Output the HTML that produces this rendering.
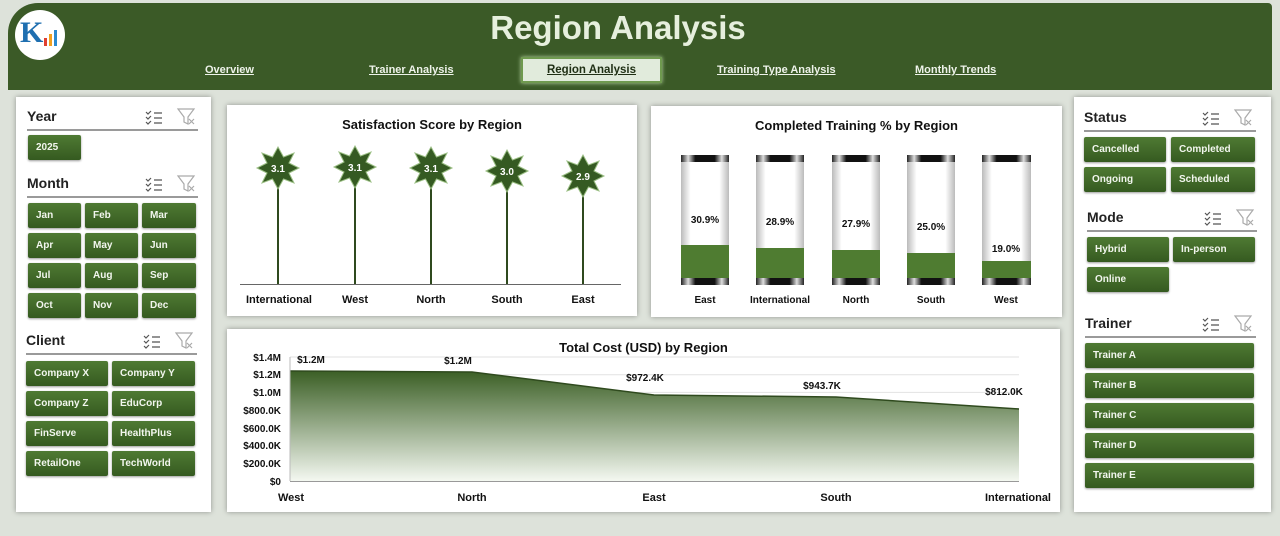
<!DOCTYPE html>
<html><head><meta charset="utf-8"><style>
*{margin:0;padding:0;box-sizing:border-box}
body{width:1280px;height:536px;background:#dde2da;font-family:"Liberation Sans",sans-serif;position:relative;overflow:hidden}
.a{position:absolute}
.hdr{left:8px;top:3px;width:1264px;height:87px;background:#3b5a27;border-radius:30px 4px 0 0}
.title{left:0;width:1236px;top:9px;text-align:center;font-size:33px;font-weight:bold;color:#e6efdd}
.nav{top:64px;font-size:11px;font-weight:bold;color:#eef3ea;text-decoration:underline}
.navsel{left:521px;top:57px;width:141px;height:26px;background:#e1ebdc;border:2px solid #6f9a4f;box-shadow:0 0 4px #b9d6a5;color:#1f2f14;font-size:11.5px;font-weight:bold;text-decoration:underline;text-align:center;line-height:22px}
.panel{background:#fff;box-shadow:0 0 5px rgba(0,0,0,.35)}
.h{font-size:14px;font-weight:bold;color:#222}
.ln{height:2px;background:#9a9a9a}
.b{background:linear-gradient(#4f7a33,#355a20);color:#f2f6ee;font-size:10px;font-weight:bold;padding-left:8px;line-height:25px;height:25px;border-radius:2px;box-shadow:0 1px 2px rgba(0,0,0,.4)}
.ct{font-size:13px;font-weight:bold;color:#111;text-align:center}
svg text{font-family:"Liberation Sans",sans-serif}
</style></head><body>
<div class="a hdr"></div>
<div class="a" style="left:15px;top:10px;width:50px;height:50px;border-radius:50%;background:#fff"></div>
<div class="a" style="left:20px;top:16px;font-size:30px;font-weight:bold;color:#1f6fb0;font-family:'Liberation Serif',serif">K</div>
<div class="a" style="left:44px;top:38px;width:3px;height:8px;background:#e04030"></div>
<div class="a" style="left:49px;top:34px;width:3px;height:12px;background:#f0a020"></div>
<div class="a" style="left:54px;top:30px;width:3px;height:16px;background:#2a8ad0"></div>
<div class="a title">Region Analysis</div>
<div class="a nav" style="left:205px">Overview</div>
<div class="a nav" style="left:369px">Trainer Analysis</div>
<div class="a navsel">Region Analysis</div>
<div class="a nav" style="left:717px">Training Type Analysis</div>
<div class="a nav" style="left:915px">Monthly Trends</div>

<div class="a panel" style="left:16px;top:97px;width:195px;height:415px"></div>
<div class="a h" style="left:27px;top:108px">Year</div>
<div class="a h" style="left:27px;top:175px">Month</div>
<div class="a h" style="left:26px;top:332px">Client</div>
<div class="a ln" style="left:27px;top:129px;width:171px"></div>
<div class="a ln" style="left:27px;top:196px;width:171px"></div>
<div class="a ln" style="left:26px;top:353px;width:171px"></div>
<div class="a b" style="left:28px;top:135px;width:53px">2025</div>
<div class="a b" style="left:28px;top:203px;width:53px">Jan</div>
<div class="a b" style="left:85px;top:203px;width:53px">Feb</div>
<div class="a b" style="left:142px;top:203px;width:54px">Mar</div>
<div class="a b" style="left:28px;top:233px;width:53px">Apr</div>
<div class="a b" style="left:85px;top:233px;width:53px">May</div>
<div class="a b" style="left:142px;top:233px;width:54px">Jun</div>
<div class="a b" style="left:28px;top:263px;width:53px">Jul</div>
<div class="a b" style="left:85px;top:263px;width:53px">Aug</div>
<div class="a b" style="left:142px;top:263px;width:54px">Sep</div>
<div class="a b" style="left:28px;top:293px;width:53px">Oct</div>
<div class="a b" style="left:85px;top:293px;width:53px">Nov</div>
<div class="a b" style="left:142px;top:293px;width:54px">Dec</div>
<div class="a b" style="left:26px;top:361px;width:82px">Company X</div>
<div class="a b" style="left:112px;top:361px;width:83px">Company Y</div>
<div class="a b" style="left:26px;top:391px;width:82px">Company Z</div>
<div class="a b" style="left:112px;top:391px;width:83px">EduCorp</div>
<div class="a b" style="left:26px;top:421px;width:82px">FinServe</div>
<div class="a b" style="left:112px;top:421px;width:83px">HealthPlus</div>
<div class="a b" style="left:26px;top:451px;width:82px">RetailOne</div>
<div class="a b" style="left:112px;top:451px;width:83px">TechWorld</div>

<div class="a panel" style="left:1074px;top:97px;width:197px;height:415px"></div>
<div class="a h" style="left:1084px;top:109px">Status</div>
<div class="a h" style="left:1087px;top:209px">Mode</div>
<div class="a h" style="left:1085px;top:315px">Trainer</div>
<div class="a ln" style="left:1084px;top:130px;width:172px"></div>
<div class="a ln" style="left:1087px;top:230px;width:170px"></div>
<div class="a ln" style="left:1085px;top:336px;width:171px"></div>
<div class="a b" style="left:1084px;top:137px;width:82px">Cancelled</div>
<div class="a b" style="left:1171px;top:137px;width:84px">Completed</div>
<div class="a b" style="left:1084px;top:167px;width:82px">Ongoing</div>
<div class="a b" style="left:1171px;top:167px;width:84px">Scheduled</div>
<div class="a b" style="left:1087px;top:237px;width:82px">Hybrid</div>
<div class="a b" style="left:1173px;top:237px;width:82px">In-person</div>
<div class="a b" style="left:1087px;top:267px;width:82px">Online</div>
<div class="a b" style="left:1085px;top:343px;width:169px">Trainer A</div>
<div class="a b" style="left:1085px;top:373px;width:169px">Trainer B</div>
<div class="a b" style="left:1085px;top:403px;width:169px">Trainer C</div>
<div class="a b" style="left:1085px;top:433px;width:169px">Trainer D</div>
<div class="a b" style="left:1085px;top:463px;width:169px">Trainer E</div>

<div class="a panel" style="left:227px;top:105px;width:410px;height:211px"></div>
<div class="a panel" style="left:651px;top:106px;width:411px;height:211px"></div>
<div class="a panel" style="left:227px;top:329px;width:833px;height:183px"></div>
<div class="a ct" style="left:227px;top:117px;width:410px">Satisfaction Score by Region</div>
<div class="a ct" style="left:651px;top:118px;width:411px">Completed Training % by Region</div>
<div class="a ct" style="left:227px;top:340px;width:833px">Total Cost (USD) by Region</div>

<svg class="a" style="left:0;top:0" width="1280" height="536">
<defs>
<linearGradient id="ar" x1="0" y1="0" x2="0" y2="1"><stop offset="0" stop-color="#3b5f25"/><stop offset="1" stop-color="#f4f8f1"/></linearGradient>
<linearGradient id="cy" x1="0" y1="0" x2="1" y2="0"><stop offset="0" stop-color="#bbb"/><stop offset=".2" stop-color="#fff"/><stop offset=".8" stop-color="#fff"/><stop offset="1" stop-color="#bbb"/></linearGradient>
<linearGradient id="cap" x1="0" y1="0" x2="1" y2="0"><stop offset="0" stop-color="#222"/><stop offset=".15" stop-color="#ddd"/><stop offset=".3" stop-color="#111"/><stop offset=".7" stop-color="#111"/><stop offset=".85" stop-color="#ddd"/><stop offset="1" stop-color="#222"/></linearGradient>
<g id="st"><polygon points="0,-21 5.5,-11 16,-15 11,-5 21,0 11,5 16,15 5.5,11 0,21 -5.5,11 -16,15 -11,5 -21,0 -11,-5 -16,-15 -5.5,-11" fill="#355a22" stroke="#9bbf84" stroke-width="1"/></g>
</defs>
<g stroke="#555" stroke-width="1.2" fill="none">
<path d="M146 112l2 2 3-3M146 117l2 2 3-3M146 122l2 2 3-3M154 113h8M154 118h8M154 123h8"/>
<path d="M146 179l2 2 3-3M146 184l2 2 3-3M146 189l2 2 3-3M154 180h8M154 185h8M154 190h8"/>
<path d="M144 336l2 2 3-3M144 341l2 2 3-3M144 346l2 2 3-3M152 337h8M152 342h8M152 347h8"/>
<path d="M1203 113l2 2 3-3M1203 118l2 2 3-3M1203 123l2 2 3-3M1211 114h8M1211 119h8M1211 124h8"/>
<path d="M1205 213l2 2 3-3M1205 218l2 2 3-3M1205 223l2 2 3-3M1213 214h8M1213 219h8M1213 224h8"/>
<path d="M1203 319l2 2 3-3M1203 324l2 2 3-3M1203 329l2 2 3-3M1211 320h8M1211 325h8M1211 330h8"/>
</g>
<g stroke="#aaa" stroke-width="1.2" fill="none">
<path d="M178 109h16l-6 8v7l-4-2v-5z M189 119l5 5M194 119l-5 5"/>
<path d="M178 176h16l-6 8v7l-4-2v-5z M189 186l5 5M194 186l-5 5"/>
<path d="M176 333h16l-6 8v7l-4-2v-5z M187 343l5 5M192 343l-5 5"/>
<path d="M1235 110h16l-6 8v7l-4-2v-5z M1246 120l5 5M1251 120l-5 5"/>
<path d="M1237 210h16l-6 8v7l-4-2v-5z M1248 220l5 5M1253 220l-5 5"/>
<path d="M1235 316h16l-6 8v7l-4-2v-5z M1246 326l5 5M1251 326l-5 5"/>
</g>
<line x1="240" y1="284.5" x2="621" y2="284.5" stroke="#666" stroke-width="1"/>
<g stroke="#2f4a1e" stroke-width="2">
<line x1="278" y1="168" x2="278" y2="284"/><line x1="355" y1="167" x2="355" y2="284"/><line x1="431" y1="168" x2="431" y2="284"/><line x1="507" y1="171" x2="507" y2="284"/><line x1="583" y1="176" x2="583" y2="284"/></g>
<use href="#st" x="278" y="168"/><use href="#st" x="355" y="167"/><use href="#st" x="431" y="168"/><use href="#st" x="507" y="171"/><use href="#st" x="583" y="176"/>
<g font-size="10" font-weight="bold" fill="#fff" text-anchor="middle">
<text x="278" y="172">3.1</text><text x="355" y="171">3.1</text><text x="431" y="172">3.1</text><text x="507" y="175">3.0</text><text x="583" y="180">2.9</text></g>
<g font-size="11" font-weight="bold" fill="#111" text-anchor="middle">
<text x="279" y="303">International</text><text x="355" y="303">West</text><text x="431" y="303">North</text><text x="507" y="303">South</text><text x="583" y="303">East</text></g>
<g>
<rect x="681" y="155" width="48" height="130" fill="url(#cy)"/><rect x="681" y="245" width="48" height="40" fill="#4f7c31"/>
<rect x="756" y="155" width="48" height="130" fill="url(#cy)"/><rect x="756" y="248" width="48" height="37" fill="#4f7c31"/>
<rect x="832" y="155" width="48" height="130" fill="url(#cy)"/><rect x="832" y="250" width="48" height="35" fill="#4f7c31"/>
<rect x="907" y="155" width="48" height="130" fill="url(#cy)"/><rect x="907" y="253" width="48" height="32" fill="#4f7c31"/>
<rect x="982" y="155" width="49" height="130" fill="url(#cy)"/><rect x="982" y="261" width="49" height="24" fill="#4f7c31"/>
<rect x="681" y="155" width="48" height="7" fill="url(#cap)"/><rect x="681" y="278" width="48" height="7" fill="url(#cap)"/>
<rect x="756" y="155" width="48" height="7" fill="url(#cap)"/><rect x="756" y="278" width="48" height="7" fill="url(#cap)"/>
<rect x="832" y="155" width="48" height="7" fill="url(#cap)"/><rect x="832" y="278" width="48" height="7" fill="url(#cap)"/>
<rect x="907" y="155" width="48" height="7" fill="url(#cap)"/><rect x="907" y="278" width="48" height="7" fill="url(#cap)"/>
<rect x="982" y="155" width="49" height="7" fill="url(#cap)"/><rect x="982" y="278" width="49" height="7" fill="url(#cap)"/>
</g>
<g font-size="10" font-weight="bold" fill="#111" text-anchor="middle">
<text x="705" y="223">30.9%</text><text x="780" y="225">28.9%</text><text x="856" y="227">27.9%</text><text x="931" y="230">25.0%</text><text x="1006" y="252">19.0%</text>
<text x="705" y="303">East</text><text x="780" y="303">International</text><text x="856" y="303">North</text><text x="931" y="303">South</text><text x="1006" y="303">West</text></g>
<g stroke="#e2e2e2" stroke-width="1">
<line x1="290" y1="357" x2="1019" y2="357"/><line x1="290" y1="374.7" x2="1019" y2="374.7"/><line x1="290" y1="392.4" x2="1019" y2="392.4"/><line x1="290" y1="410.1" x2="1019" y2="410.1"/><line x1="290" y1="427.9" x2="1019" y2="427.9"/><line x1="290" y1="445.6" x2="1019" y2="445.6"/><line x1="290" y1="463.3" x2="1019" y2="463.3"/></g>
<polygon points="290,371 472,372 654,395 836,397 1019,409 1019,481 290,481" fill="url(#ar)"/>
<polyline points="290,371 472,372 654,395 836,397 1019,409" fill="none" stroke="#2f4a1e" stroke-width="1.5"/>
<line x1="290" y1="357" x2="290" y2="481" stroke="#bbb"/>
<line x1="290" y1="481.5" x2="1019" y2="481.5" stroke="#999"/>
<g font-size="10" font-weight="bold" fill="#111" text-anchor="end">
<text x="281" y="361">$1.4M</text><text x="281" y="378">$1.2M</text><text x="281" y="396">$1.0M</text><text x="281" y="414">$800.0K</text><text x="281" y="432">$600.0K</text><text x="281" y="449">$400.0K</text><text x="281" y="467">$200.0K</text><text x="281" y="485">$0</text></g>
<g font-size="10" font-weight="bold" fill="#111" text-anchor="middle">
<text x="311" y="363">$1.2M</text><text x="458" y="364">$1.2M</text><text x="645" y="381">$972.4K</text><text x="822" y="389">$943.7K</text><text x="1004" y="395">$812.0K</text></g>
<g font-size="11" font-weight="bold" fill="#111" text-anchor="middle">
<text x="291" y="501">West</text><text x="472" y="501">North</text><text x="654" y="501">East</text><text x="836" y="501">South</text><text x="1018" y="501">International</text></g>
</svg>
</body></html>
